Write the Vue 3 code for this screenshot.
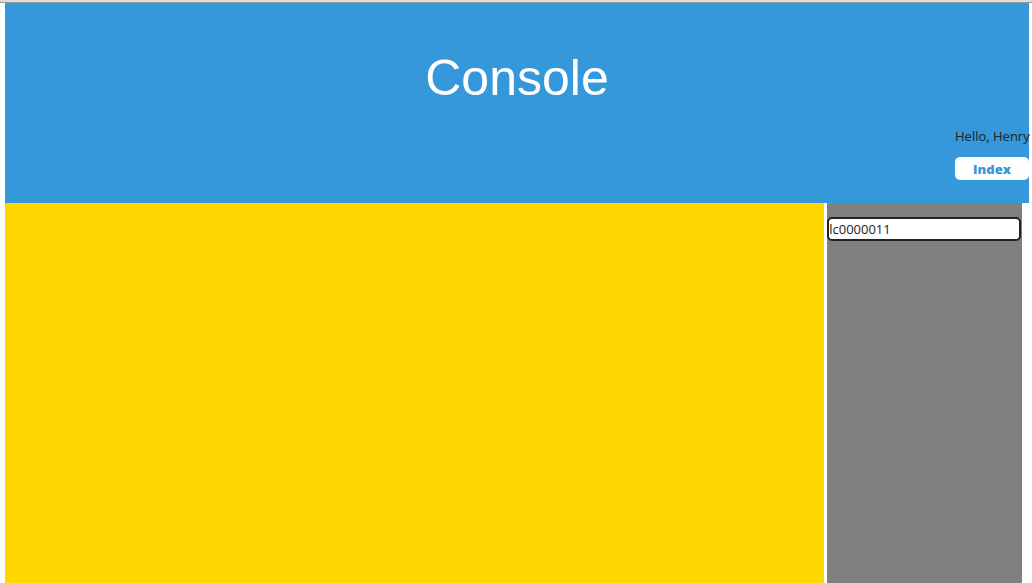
<script setup>
import { ref } from 'vue'

const userName = 'Henry'
const code = ref('lc0000011')
</script>

<template>
  <div class="page">
    <div class="edge"></div>
    <div class="console">
      <header class="banner">
        <h1>Console</h1>
        <div class="account">
          <p>Hello, {{ userName }}</p>
          <button type="button">Index</button>
        </div>
      </header>
      <div class="workspace">
        <main class="stage"></main>
        <aside class="side">
          <input v-model="code" type="text" aria-label="Code" spellcheck="false" />
        </aside>
      </div>
    </div>
  </div>
</template>

<style>
body {
  margin: 0;
  background: #fff;
}
</style>

<style scoped>
.page {
  display: flex;
  flex-direction: column;
  min-height: 100vh;
  font-family: "Open Sans", "Noto Sans", sans-serif;
  font-size: 13px;
  color: #222;
}
.edge {
  height: 2px;
  background: #ddd;
  border-bottom: 1px solid #999;
}
.console {
  flex: 1;
  display: flex;
  flex-direction: column;
  margin: 0 3px 0 5px;
}
.banner {
  box-sizing: border-box;
  height: 200px;
  padding: 46px 0 0;
  background: #3498db;
}
h1 {
  margin: 0;
  font-family: "Liberation Sans", Arial, sans-serif;
  font-size: 50px;
  font-weight: 400;
  line-height: 58px;
  text-align: center;
  color: #fff;
}
.account {
  display: flex;
  flex-direction: column;
  gap: 12px;
  width: 74px;
  margin: 20px 0 0 auto;
}
.account p {
  margin: 0;
  line-height: 18px;
  white-space: nowrap;
}
button {
  height: 23px;
  padding: 2px 0 0;
  border: 0;
  border-radius: 5px;
  background: #fff;
  color: #3498db;
  font: 800 13px/21px "Open Sans", "Noto Sans", sans-serif;
}
.workspace {
  flex: 1;
  display: flex;
  gap: 3px;
}
.stage {
  width: 80%;
  background: #ffd700;
}
.side {
  box-sizing: border-box;
  width: 19%;
  padding: 14px 1px 0 0;
  background: #808080;
}
input {
  display: block;
  box-sizing: border-box;
  width: 100%;
  height: 24px;
  padding: 0;
  border: 2px solid #222;
  border-radius: 5px;
  outline: 0;
  background: #fff;
  color: #222;
  font: 13px/20px "Open Sans", "Noto Sans", sans-serif;
}
</style>
